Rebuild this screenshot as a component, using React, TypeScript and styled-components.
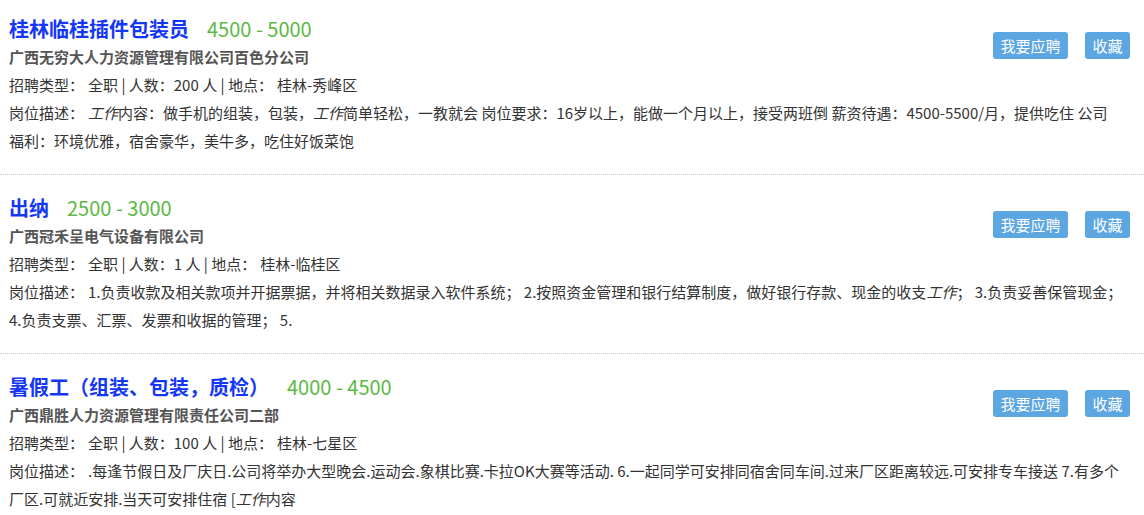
import React from 'react';
import styled, { createGlobalStyle } from 'styled-components';

const GlobalStyle = createGlobalStyle`
  html, body {
    margin: 0;
    padding: 0;
    background: #fff;
  }
  body {
    font-family: "Noto Sans CJK SC", "Microsoft YaHei", sans-serif;
    font-size: 15px;
    color: #333;
  }
`;

const List = styled.div`
  width: 1144px;
`;

const Item = styled.div`
  padding: 19px 10px 19px 9px;
  border-bottom: 1px dotted #c8c8c8;

  &:first-child {
    padding-top: 15px;
  }
`;

const Actions = styled.div`
  float: right;
  display: flex;
  gap: 17px;
  margin-top: 17px;
  margin-right: 4px;
`;

const Button = styled.button`
  height: 27px;
  padding: 0 7.5px;
  border: none;
  border-radius: 3px;
  background: #5ca6e2;
  color: #fff;
  font-family: inherit;
  font-size: 15px;
  line-height: 27px;
  cursor: pointer;
`;

const TitleRow = styled.div`
  font-size: 20px;
  line-height: 28px;
  height: 28px;
  white-space: nowrap;
`;

const Title = styled.a`
  font-weight: bold;
  color: #1437f7;
  text-decoration: none;
`;

const Salary = styled.span`
  margin-left: 18px;
  color: #5cb944;
`;

const Company = styled.div`
  line-height: 28px;
  font-weight: bold;
  color: #555;
`;

const Line = styled.div`
  line-height: 28px;
  white-space: nowrap;
`;

const Label = styled.span`
  margin-right: 4px;
`;

const Keyword = styled.em`
  font-style: italic;
`;

type Seg = string | { kw: string };

interface Job {
  title: string;
  salary: string;
  company: string;
  count: string;
  place: string;
  desc: Seg[][];
}

const jobs: Job[] = [
  {
    title: '桂林临桂插件包装员',
    salary: '4500 - 5000',
    company: '广西无穷大人力资源管理有限公司百色分公司',
    count: '200',
    place: '桂林-秀峰区',
    desc: [
      [
        { kw: '工作' },
        '内容：做手机的组装，包装，',
        { kw: '工作' },
        '简单轻松，一教就会 岗位要求：16岁以上，能做一个月以上，接受两班倒 薪资待遇：4500-5500/月，提供吃住 公司',
      ],
      ['福利：环境优雅，宿舍豪华，美牛多，吃住好饭菜饱'],
    ],
  },
  {
    title: '出纳',
    salary: '2500 - 3000',
    company: '广西冠禾呈电气设备有限公司',
    count: '1',
    place: '桂林-临桂区',
    desc: [
      [
        '1.负责收款及相关款项并开据票据，并将相关数据录入软件系统；  2.按照资金管理和银行结算制度，做好银行存款、现金的收支',
        { kw: '工作' },
        '；  3.负责妥善保管现金；',
      ],
      ['4.负责支票、汇票、发票和收据的管理；  5.'],
    ],
  },
  {
    title: '暑假工（组装、包装，质检）',
    salary: '4000 - 4500',
    company: '广西鼎胜人力资源管理有限责任公司二部',
    count: '100',
    place: '桂林-七星区',
    desc: [
      [
        '.每逢节假日及厂庆日.公司将举办大型晚会.运动会.象棋比赛.卡拉OK大赛等活动. 6.一起同学可安排同宿舍同车间.过来厂区距离较远.可安排专车接送 7.有多个',
      ],
      ['厂区.可就近安排.当天可安排住宿 [', { kw: '工作' }, '内容'],
    ],
  },
];

function renderSegs(segs: Seg[]) {
  return segs.map((s, i) =>
    typeof s === 'string' ? <React.Fragment key={i}>{s}</React.Fragment> : <Keyword key={i}>{s.kw}</Keyword>
  );
}

function JobItem({ job }: { job: Job }) {
  return (
    <Item>
      <Actions>
        <Button>我要应聘</Button>
        <Button>收藏</Button>
      </Actions>
      <TitleRow>
        <Title href="#">{job.title}</Title>
        <Salary>{job.salary}</Salary>
      </TitleRow>
      <Company>{job.company}</Company>
      <Line>
        <Label>招聘类型：</Label>全职 | 人数：{job.count} 人 | <Label>地点：</Label>
        {job.place}
      </Line>
      {job.desc.map((segs, i) => (
        <Line key={i}>
          {i === 0 && <Label>岗位描述：</Label>}
          {renderSegs(segs)}
        </Line>
      ))}
    </Item>
  );
}

export default function App() {
  return (
    <>
      <GlobalStyle />
      <List>
        {jobs.map((job) => (
          <JobItem key={job.title} job={job} />
        ))}
      </List>
    </>
  );
}
